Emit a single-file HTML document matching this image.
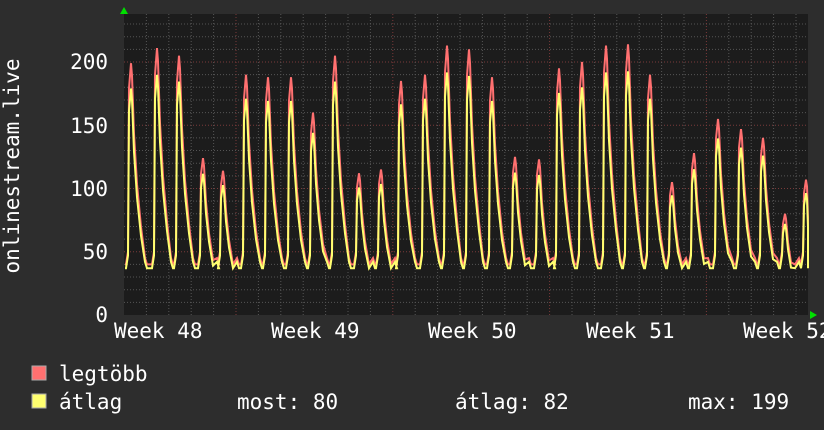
<!DOCTYPE html>
<html><head><meta charset="utf-8"><style>
body{margin:0;background:#2d2d2d;width:824px;height:430px;overflow:hidden;font-family:"DejaVu Sans Mono","Liberation Mono",monospace;color:#fff}
svg{position:absolute;left:0;top:0}
text{font-family:"DejaVu Sans Mono","Liberation Mono",monospace;fill:#fff;font-size:21px}
</style></head><body>
<svg width="824" height="430" id="s">
<rect x="124" y="14" width="684" height="301" fill="#1c1c1c"/>
<g id="grid"></g>
<path id="red" fill="none" stroke="#ff7070" stroke-width="2"/>
<path id="yel" fill="none" stroke="#ffff70" stroke-width="2"/>
<polygon points="120,14 128,14 124,7" fill="#00e000"/>
<polygon points="810,311 810,319 817,315" fill="#00e000"/>
<g text-anchor="end">
<text x="108" y="69">200</text><text x="108" y="133">150</text><text x="108" y="196">100</text><text x="108" y="259">50</text><text x="108" y="322">0</text>
</g>
<text x="114" y="338">Week 48</text><text x="271" y="338">Week 49</text><text x="428" y="338">Week 50</text><text x="586" y="338">Week 51</text><text x="743" y="338">Week 52</text>
<text transform="translate(19,166) rotate(-90)" text-anchor="middle">onlinestream.live</text>
<rect x="32" y="366" width="14" height="14" fill="#ff7070" stroke="#aaa" stroke-width="1"/>
<rect x="32" y="394" width="14" height="14" fill="#ffff70" stroke="#aaa" stroke-width="1"/>
<text x="59" y="381">legtöbb</text>
<text x="59" y="409">átlag</text>
<text x="237" y="409">most: 80</text>
<text x="455" y="409">átlag: 82</text>
<text x="688" y="409">max: 199</text>
</svg>
<script>
var g=document.getElementById('grid'),h='';
function Y(v){return 315-v*1.265;}
for(var v=10;v<=230;v+=10){var y=Y(v);var maj=v%50==0;h+='<line x1="124" x2="808" y1="'+y+'" y2="'+y+'" stroke="'+(maj?'#7a3a3a':'#555')+'" stroke-dasharray="1,2"/>';}
for(var x=124+22.4;x<808;x+=22.4){var k=Math.round((x-124)/22.4);var maj=(k-5)%7==0;h+='<line x1="'+x+'" x2="'+x+'" y1="14" y2="315" stroke="'+(maj?'#7a3a3a':'#555')+'" stroke-dasharray="1,2"/>';}
g.innerHTML=h;
var P=[[131,199],[157,211],[179,205],[203,124],[223,114],[246,190],[268,188],[291,188],[313,160],[335,205],[359,112],[381,115],[401,185],[425,190],[447,213],[469,210],[492,188],[515,125],[539,123],[559,195],[582,200],[606,213],[628,214],[650,190],[672,105],[694,128],[718,155],[741,147],[763,140],[785,80],[806,107]];
function path(f,b){var d='M125,'+Y(b);for(var i=0;i<P.length;i++){var p=P[i][0],v=P[i][1]*f;var pts=[[p-5,b],[p-3,b+10],[p-2,v*0.9],[p,v],[p+1,v*0.95],[p+3,v*0.72],[p+6,v*0.52],[p+10,Math.max(b,v*0.35)],[p+14,b+5],[p+16,b]];for(var j=0;j<pts.length;j++){if(pts[j][0]<125)continue;if(pts[j][0]>808)pts[j][0]=808;d+=' L'+pts[j][0]+','+Y(pts[j][1]);}}return d;}
document.getElementById('red').setAttribute('d',path(1,40));
document.getElementById('yel').setAttribute('d',path(0.9,37));
</script>
</body></html>
